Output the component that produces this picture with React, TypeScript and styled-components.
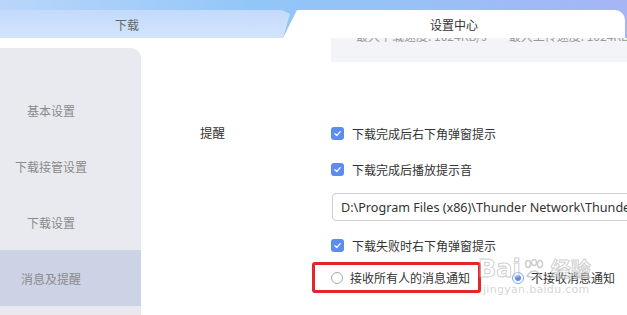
import React from "react";
import styled, { createGlobalStyle } from "styled-components";

const Global = createGlobalStyle`
  html, body {
    margin: 0;
    padding: 0;
    width: 627px;
    height: 315px;
    overflow: hidden;
    background: #ffffff;
    font-family: "Noto Sans CJK SC", "Noto Sans", sans-serif;
  }
  * { box-sizing: border-box; }
`;

const Page = styled.div`
  position: relative;
  width: 627px;
  height: 315px;
  display: flex;
  flex-direction: column;
  overflow: hidden;
  background: #ffffff;
`;

const Header = styled.div`
  position: relative;
  z-index: 2;
  height: 38px;
  flex: 0 0 38px;
  padding-top: 10px;
  display: flex;
  background: linear-gradient(90deg, #b9d6fa 0%, #93c6f8 40%, #95c2f7 60%, #a7b5f4 100%);
`;

const Tab = styled.div<{ $active?: boolean }>`
  height: 28px;
  display: flex;
  align-items: center;
  justify-content: center;
  font-size: 12px;
  ${(p) =>
    p.$active
      ? `
    flex: 1;
    margin-left: -7px;
    margin-right: 2px;
    background: #ffffff;
    color: #333333;
    border-radius: 10px 10px 0 0;
    clip-path: polygon(14px 0, 100% 0, 100% 100%, 0 100%);
  `
      : `
    flex: 0 0 290px;
    padding-right: 36px;
    background: linear-gradient(180deg, #c3dafb 0%, #d3e5fc 100%);
    color: #666666;
    clip-path: polygon(0 0, calc(100% - 8px) 0, 100% 4px, calc(100% - 7px) 100%, 0 100%);
  `}
`;

const Body = styled.div`
  flex: 1;
  display: flex;
  min-height: 0;
`;

const Sidebar = styled.nav`
  flex: 0 0 141px;
  margin-top: 10px;
  padding-top: 34px;
  background: #e9eaf0;
  border-top-right-radius: 10px;
  display: flex;
  flex-direction: column;
`;

const NavItem = styled.div<{ $active?: boolean }>`
  height: 56px;
  flex: 0 0 56px;
  display: flex;
  align-items: center;
  justify-content: center;
  padding-right: 39px;
  font-size: 12px;
  color: #8a8a8a;
  background: ${(p) => (p.$active ? "#ccd3e5" : "transparent")};
`;

const Content = styled.div`
  flex: 1;
  display: flex;
  flex-direction: column;
`;

const SpeedBar = styled.div`
  margin-left: 190px;
  height: 24px;
  flex: 0 0 24px;
  background: #f3f4f8;
  overflow: hidden;
  padding-left: 25px;
`;

const SpeedText = styled.div`
  margin-top: -9px;
  display: flex;
  gap: 22px;
  font-size: 12px;
  line-height: 14px;
  color: #9a9a9a;
  white-space: nowrap;
`;

const Section = styled.div`
  margin-top: 59px;
  padding-left: 59px;
  display: grid;
  grid-template-columns: 131px 1fr;
  align-items: start;
`;

const Label = styled.div`
  font-size: 12.5px;
  line-height: 24px;
  color: #333333;
`;

const Options = styled.div`
  display: flex;
  flex-direction: column;
  gap: 12px;
  min-width: 0;
`;

const CheckRow = styled.div`
  height: 24px;
  display: flex;
  align-items: center;
  gap: 8px;
  font-size: 12px;
  color: #333333;
  white-space: nowrap;
`;

const CheckBox = styled.span`
  width: 13px;
  height: 13px;
  border-radius: 3px;
  background: #5b8cf0;
  display: flex;
  align-items: center;
  justify-content: center;
  flex: 0 0 13px;
`;

const PathBox = styled.div`
  width: 320px;
  height: 28px;
  margin-left: 1px;
  border: 1px solid #cfcfcf;
  border-radius: 4px;
  padding-left: 8px;
  display: flex;
  align-items: center;
  font-family: "Noto Sans", "Open Sans", sans-serif;
  font-size: 12.6px;
  color: #333333;
  white-space: nowrap;
  overflow: hidden;
`;

const RadioGroup = styled.div`
  margin-top: -7px;
  display: flex;
  align-items: center;
  gap: 31px;
`;

const RadioOption = styled.div<{ $marked?: boolean }>`
  height: 31px;
  display: flex;
  align-items: center;
  gap: 7px;
  font-size: 12px;
  color: #333333;
  white-space: nowrap;
  ${(p) =>
    p.$marked
      ? `
    margin-left: -19px;
    padding: 0 8px 0 16px;
    border: 3px solid #e3262a;
    border-radius: 3px;
  `
      : ""}
`;

const RadioDot = styled.span<{ $checked?: boolean }>`
  width: 12px;
  height: 12px;
  flex: 0 0 12px;
  border-radius: 50%;
  border: 1px solid ${(p) => (p.$checked ? "#7ea6f3" : "#a8a8a8")};
  background: #ffffff;
  display: flex;
  align-items: center;
  justify-content: center;
  &::after {
    content: "";
    width: 6px;
    height: 6px;
    border-radius: 50%;
    background: ${(p) => (p.$checked ? "#5b8cf0" : "transparent")};
  }
`;

const Watermark = styled.div`
  position: absolute;
  left: 478px;
  top: 255px;
  width: 125px;
  height: 46px;
  pointer-events: none;
  z-index: 3;
  color: rgba(185, 185, 185, 0.6);
  font-family: "DejaVu Sans", sans-serif;
`;

const WmTop = styled.div`
  display: flex;
  align-items: center;
  gap: 2px;
  font-size: 24px;
  font-weight: bold;
  line-height: 28px;
  color: rgba(255, 255, 255, 0.4);
  -webkit-text-stroke: 1px rgba(180, 180, 180, 0.65);
`;

const WmCjk = styled.span`
  font-family: "Noto Sans CJK SC", sans-serif;
  font-size: 20px;
  margin-left: 4px;
`;

const WmBottom = styled.div`
  margin-left: 5px;
  font-size: 11px;
  line-height: 14px;
  letter-spacing: 0.3px;
`;

const Check = () => (
  <CheckBox>
    <svg width="9" height="9" viewBox="0 0 10 10">
      <path d="M2 5.2 L4.2 7.2 L8 3" fill="none" stroke="#ffffff" strokeWidth="1.4" strokeLinecap="round" strokeLinejoin="round" />
    </svg>
  </CheckBox>
);

const navItems = ["基本设置", "下载接管设置", "下载设置", "消息及提醒"];

export default function App() {
  return (
    <Page>
      <Global />
      <Header>
        <Tab>下载</Tab>
        <Tab $active>设置中心</Tab>
      </Header>
      <Body>
        <Sidebar>
          {navItems.map((n) => (
            <NavItem key={n} $active={n === "消息及提醒"}>
              {n}
            </NavItem>
          ))}
        </Sidebar>
        <Content>
          <SpeedBar>
            <SpeedText>
              <span>最大下载速度: 1024KB/s</span>
              <span>最大上传速度: 1024KB/s</span>
            </SpeedText>
          </SpeedBar>
          <Section>
            <Label>提醒</Label>
            <Options>
              <CheckRow>
                <Check />
                下载完成后右下角弹窗提示
              </CheckRow>
              <CheckRow>
                <Check />
                下载完成后播放提示音
              </CheckRow>
              <PathBox>D:\Program Files (x86)\Thunder Network\Thunder\Program\Sound</PathBox>
              <CheckRow>
                <Check />
                下载失败时右下角弹窗提示
              </CheckRow>
              <RadioGroup>
                <RadioOption $marked>
                  <RadioDot />
                  接收所有人的消息通知
                </RadioOption>
                <RadioOption>
                  <RadioDot $checked />
                  不接收消息通知
                </RadioOption>
              </RadioGroup>
            </Options>
          </Section>
        </Content>
      </Body>
      <Watermark>
        <WmTop>
          Bai
          <svg width="22" height="20" viewBox="0 0 22 20">
            <g fill="none" stroke="rgba(180,180,180,0.65)" strokeWidth="1.5">
              <ellipse cx="5" cy="5" rx="2.5" ry="3.5" />
              <ellipse cx="11" cy="3.5" rx="2.5" ry="3" />
              <ellipse cx="17" cy="5" rx="2.5" ry="3.5" />
              <path d="M4 17 Q11 7 18 17 Q11 20 4 17 Z" />
            </g>
          </svg>
          <WmCjk>经验</WmCjk>
        </WmTop>
        <WmBottom>jingyan.baidu.com</WmBottom>
      </Watermark>
    </Page>
  );
}
